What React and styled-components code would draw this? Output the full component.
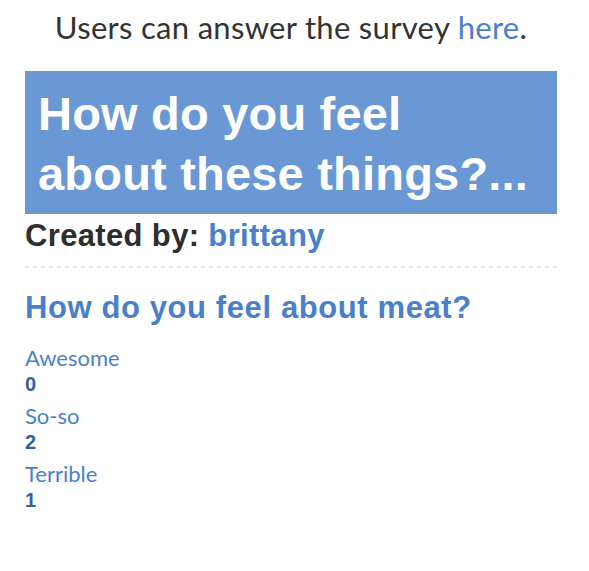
import React from "react";
import styled, { createGlobalStyle } from "styled-components";

const Global = createGlobalStyle`
  html, body { margin: 0; padding: 0; background: #fff; }
  body { font-family: "Lato", "Helvetica Neue", Arial, sans-serif; }
`;

const Page = styled.div`
  padding: 7px 0 0 25px;
  width: 532px;
`;

const Intro = styled.p`
  margin: 0;
  text-align: center;
  font-family: "Lato", sans-serif;
  font-size: 31px;
  line-height: 40px;
  letter-spacing: 0.3px;
  color: #333;
  white-space: nowrap;
`;

const Link = styled.a`
  color: #4a7fcc;
  text-decoration: none;
`;

const Banner = styled.div`
  margin-top: 24px;
  background: #6a98d4;
  padding: 13px 20px 10px 13px;
`;

const Title = styled.h1`
  margin: 0;
  font-family: "Liberation Sans", Arial, sans-serif;
  font-weight: 700;
  font-size: 47px;
  line-height: 60px;
  letter-spacing: 0.2px;
  color: #fff;
`;

const Creator = styled.div`
  font-family: "Liberation Sans", Arial, sans-serif;
  font-weight: 700;
  font-size: 31px;
  line-height: 36px;
  letter-spacing: 0.35px;
  color: #2e2e2e;
  padding-top: 4px;
`;

const CreatorName = styled.span`
  color: #4a7fcc;
`;

const Divider = styled.div`
  margin-top: 12px;
  height: 2px;
  background: repeating-linear-gradient(
    to right,
    #dde6f3 0 4px,
    transparent 4px 8px
  );
`;

const Question = styled.h2`
  margin: 0;
  padding-top: 22px;
  font-family: "Liberation Sans", Arial, sans-serif;
  font-weight: 700;
  font-size: 31px;
  line-height: 36px;
  letter-spacing: 0.6px;
  color: #4a7fcc;
`;

const Answers = styled.div`
  margin-top: 19px;
  display: flex;
  flex-direction: column;
  gap: 6px;
`;

const Answer = styled.div`
  display: flex;
  flex-direction: column;
`;

const Label = styled.span`
  font-family: "Lato", sans-serif;
  font-size: 22px;
  line-height: 26px;
  color: #4a7fcc;
`;

const Count = styled.span`
  font-family: "Liberation Sans", Arial, sans-serif;
  font-weight: 700;
  font-size: 20px;
  line-height: 26px;
  color: #35609e;
`;

const answers = [
  { label: "Awesome", count: 0 },
  { label: "So-so", count: 2 },
  { label: "Terrible", count: 1 },
];

export default function App() {
  return (
    <>
      <Global />
      <Page>
        <Intro>
          Users can answer the survey <Link href="#">here</Link>.
        </Intro>
        <Banner>
          <Title>How do you feel about these things?...</Title>
        </Banner>
        <Creator>
          Created by: <CreatorName>brittany</CreatorName>
        </Creator>
        <Divider />
        <Question>How do you feel about meat?</Question>
        <Answers>
          {answers.map((a) => (
            <Answer key={a.label}>
              <Label>{a.label}</Label>
              <Count>{a.count}</Count>
            </Answer>
          ))}
        </Answers>
      </Page>
    </>
  );
}
